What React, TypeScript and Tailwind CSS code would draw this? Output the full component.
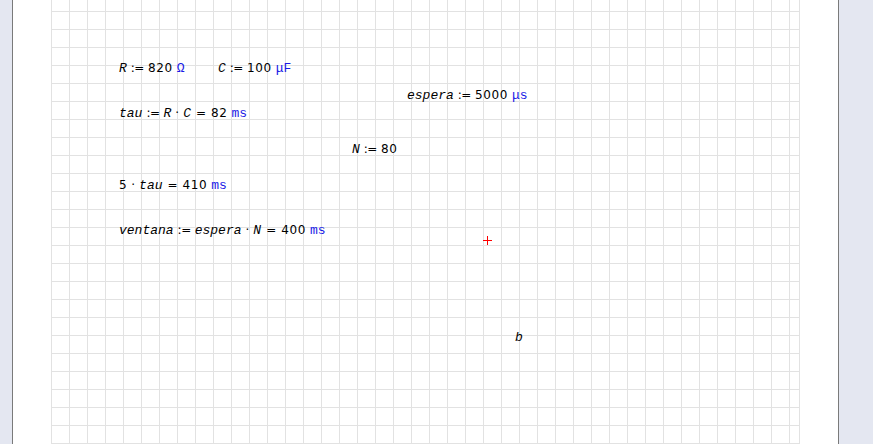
import type { ReactNode } from "react";

const num = "font-['DejaVu_Sans',sans-serif] text-[12px] text-black";
const vr = "font-['Liberation_Mono',monospace] italic text-[13px] text-black";
const unit = "font-['Liberation_Mono',monospace] text-[13px] text-[#1a1ae6]";

function V({ children }: { children: ReactNode }) {
  return <span className={vr}>{children}</span>;
}
function Nm({ children }: { children: ReactNode }) {
  return <span className={`${num} tracking-[0.6px]`}>{children}</span>;
}
function U({ children }: { children: ReactNode }) {
  return <span className={`${unit} ml-[4px]`}>{children}</span>;
}
function Def() {
  return <span className={`${num} mx-[4px] tracking-[-0.5px]`}>:=</span>;
}
function Eq() {
  return <span className={`${num} mx-[5px]`}>=</span>;
}
function Dot() {
  return <span className={`${num} mx-[4px]`}>·</span>;
}

type Region = { x: number; y: number; body: ReactNode };

const regions: Region[] = [
  { x: 119, y: 61, body: <><V>R</V><Def /><Nm>820</Nm><U>Ω</U></> },
  { x: 218, y: 61, body: <><V>C</V><Def /><Nm>100</Nm><U>μF</U></> },
  { x: 407, y: 88, body: <><V>espera</V><Def /><Nm>5000</Nm><U>μs</U></> },
  { x: 119, y: 106, body: <><V>tau</V><Def /><V>R</V><Dot /><V>C</V><Eq /><Nm>82</Nm><U>ms</U></> },
  { x: 352, y: 142, body: <><V>N</V><Def /><Nm>80</Nm></> },
  { x: 119, y: 178, body: <><Nm>5</Nm><Dot /><V>tau</V><Eq /><Nm>410</Nm><U>ms</U></> },
  {
    x: 119,
    y: 223,
    body: <><V>ventana</V><Def /><V>espera</V><Dot /><V>N</V><Eq /><Nm>400</Nm><U>ms</U></>,
  },
  { x: 515, y: 331, body: <V>b</V> },
];

export default function App() {
  return (
    <div className="flex h-[444px] w-[873px] overflow-hidden bg-[#e4e7f1]">
      <div className="w-[12px] shrink-0" />
      <div className="relative flex w-[827px] shrink-0 border-x border-[#7a7a7a] bg-white">
        <div className="ml-[38px] h-full w-[749px] border-r border-[#e2e2e2] bg-[linear-gradient(to_right,#e2e2e2_1px,transparent_1px),linear-gradient(to_bottom,#e2e2e2_1px,transparent_1px)] bg-[size:18px_18px] bg-[position:0_11px]" />
        {/* worksheet regions */}
        {regions.map((r, i) => (
          <div
            key={i}
            className="absolute flex items-baseline whitespace-nowrap leading-[14px]"
            style={{ left: r.x - 13, top: r.y }}
          >
            {r.body}
          </div>
        ))}
        {/* red insertion cross */}
        <svg
          className="absolute left-[470px] top-[236px]"
          width="9"
          height="9"
          viewBox="0 0 9 9"
          shapeRendering="crispEdges"
        >
          <rect x="4" y="0" width="1" height="9" fill="#ff0000" />
          <rect x="0" y="4" width="9" height="1" fill="#ff0000" />
        </svg>
      </div>
    </div>
  );
}
